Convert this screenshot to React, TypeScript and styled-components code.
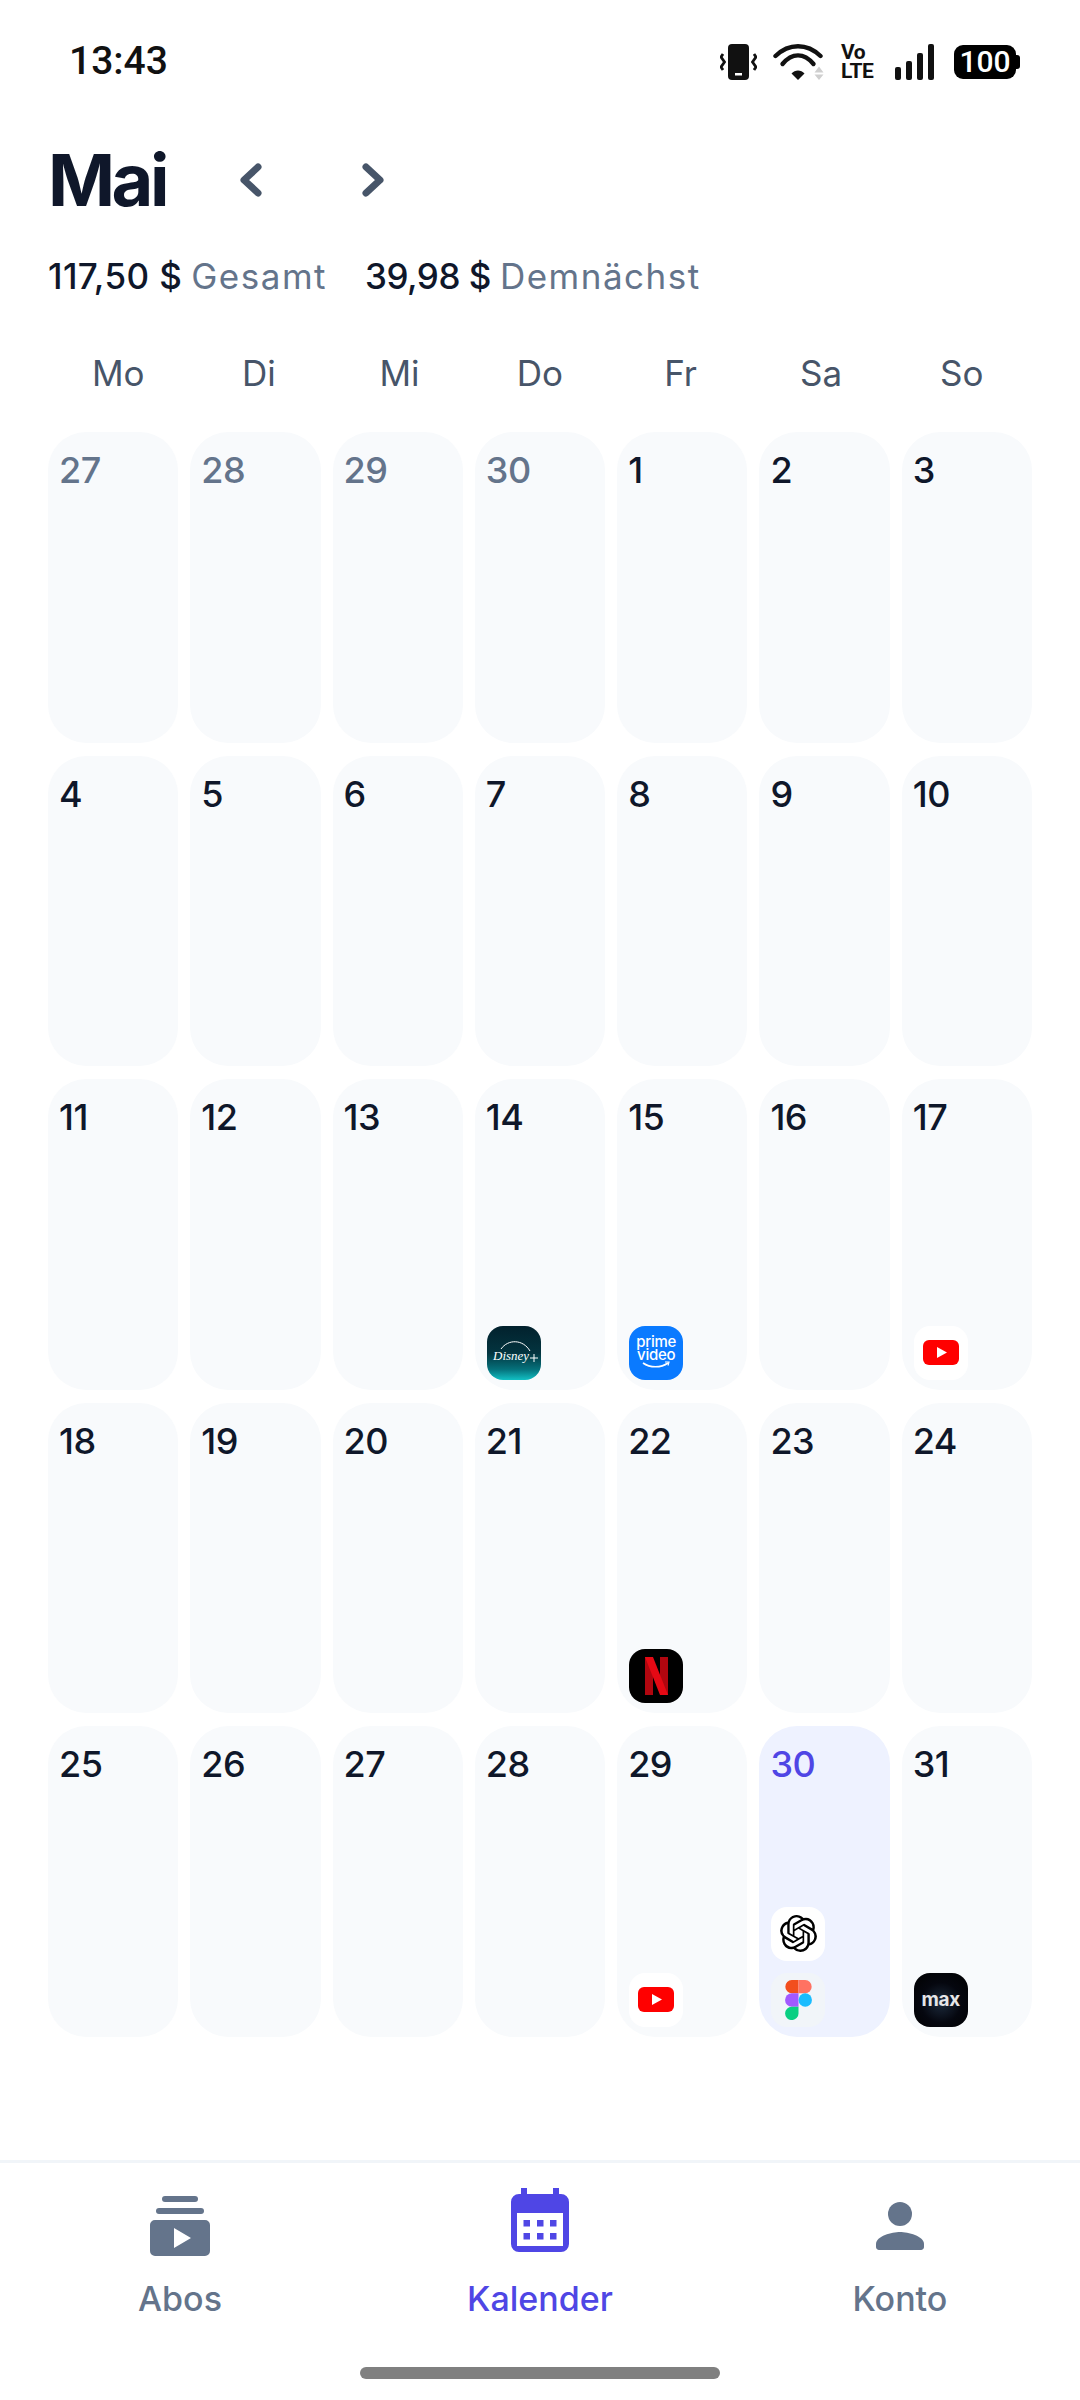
import React from "react";
import styled, { createGlobalStyle } from "styled-components";
import { SiOpenai } from "react-icons/si";

const GlobalStyle = createGlobalStyle`
  html, body {
    margin: 0;
    padding: 0;
    background: #fff;
  }
  body {
    font-family: "Inter", "Noto Sans", sans-serif;
    color: #0f172a;
  }
  * {
    box-sizing: border-box;
  }
`;

type AppIcon = "disney" | "prime" | "youtube" | "netflix" | "openai" | "figma" | "max";

type Day = {
  label: number;
  muted?: boolean;
  today?: boolean;
  icons?: AppIcon[];
};

const plain = (labels: number[]): Day[] => labels.map((label) => ({ label }));

const days: Day[] = [
  ...[27, 28, 29, 30].map((label) => ({ label, muted: true })),
  ...plain([1, 2, 3, 4, 5, 6, 7, 8, 9, 10, 11, 12, 13]),
  { label: 14, icons: ["disney"] },
  { label: 15, icons: ["prime"] },
  { label: 16 },
  { label: 17, icons: ["youtube"] },
  ...plain([18, 19, 20, 21]),
  { label: 22, icons: ["netflix"] },
  ...plain([23, 24, 25, 26, 27, 28]),
  { label: 29, icons: ["youtube"] },
  { label: 30, today: true, icons: ["openai", "figma"] },
  { label: 31, icons: ["max"] },
];

const weekdays = ["Mo", "Di", "Mi", "Do", "Fr", "Sa", "So"];

const Page = styled.div`
  width: 1080px;
  height: 2400px;
  display: flex;
  flex-direction: column;
  overflow: hidden;
  background: #fff;
`;

const StatusBar = styled.div`
  height: 134px;
  padding: 44px 64px 0 69px;
  display: flex;
  justify-content: space-between;
  align-items: flex-start;
`;

const Clock = styled.div`
  font-family: "Roboto", "Liberation Sans", sans-serif;
  font-size: 39px;
  font-weight: 500;
  line-height: 34px;
  color: #111;
`;

const StatusIcons = styled.div`
  display: flex;
  align-items: center;
  height: 36px;
`;

const WifiSvg = styled.svg`
  margin-left: 16px;
`;

const VoLte = styled.div`
  margin: 0 22px 0 17px;
  width: 32px;
  font-family: "Roboto", "Liberation Sans", sans-serif;
  font-weight: 700;
  color: #111;
  font-size: 21px;
  line-height: 19px;
  letter-spacing: -0.5px;
`;

const Battery = styled.div`
  margin-left: 20px;
  width: 62px;
  height: 34px;
  border-radius: 9px;
  background: #000;
  color: #fff;
  font-family: "Roboto", "Liberation Sans", sans-serif;
  font-size: 30px;
  font-weight: 500;
  line-height: 34px;
  text-align: center;
  position: relative;
  &::after {
    content: "";
    position: absolute;
    right: -4px;
    top: 10px;
    width: 4px;
    height: 14px;
    border-radius: 0 3px 3px 0;
    background: #000;
  }
`;

const Header = styled.div`
  padding: 0 48px;
  display: flex;
  align-items: center;
  height: 92px;
`;

const Month = styled.h1`
  margin: 0;
  width: 190px;
  font-size: 72px;
  font-weight: 700;
  line-height: 92px;
  letter-spacing: -3.5px;
  color: #0f172a;
`;

const ArrowButton = styled.button`
  width: 122px;
  height: 60px;
  padding: 0;
  border: 0;
  background: none;
  display: flex;
  align-items: center;
  color: #475569;
`;

const Totals = styled.div`
  margin-top: 28px;
  padding: 0 48px;
  display: flex;
  gap: 38px;
  font-size: 35px;
  line-height: 44px;
`;

const Total = styled.div`
  display: flex;
  gap: 9px;
`;

const Amount = styled.span<{ $spacing: number }>`
  font-weight: 500;
  letter-spacing: ${(p) => p.$spacing}px;
  color: #0f172a;
`;

const AmountLabel = styled.span`
  letter-spacing: 1.5px;
  color: #64748b;
`;

const WeekHeader = styled.div`
  margin-top: 47px;
  padding: 0 48px;
  display: grid;
  grid-template-columns: repeat(7, 1fr);
  height: 56px;
  align-items: center;
`;

const Weekday = styled.div`
  text-align: center;
  font-size: 35px;
  color: #475569;
`;

const Grid = styled.div`
  margin-top: 31px;
  padding: 0 48px;
  display: grid;
  grid-template-columns: repeat(7, 1fr);
  grid-auto-rows: 310.5px;
  gap: 13px 12px;
`;

const Cell = styled.div<{ $today?: boolean }>`
  padding: 15px 12px 10px;
  border-radius: 38px;
  background: ${(p) => (p.$today ? "#eef2ff" : "#f8fafc")};
  display: flex;
  flex-direction: column;
  justify-content: space-between;
`;

const DayNumber = styled.div<{ $muted?: boolean; $today?: boolean }>`
  margin-left: -1px;
  font-size: 36px;
  font-weight: 500;
  line-height: 46px;
  letter-spacing: -0.5px;
  color: ${(p) => (p.$today ? "#4f46e5" : p.$muted ? "#64748b" : "#0f172a")};
`;

const IconStack = styled.div`
  display: flex;
  flex-direction: column;
  gap: 12px;
`;

const Tile = styled.div<{ $bg: string }>`
  width: 54px;
  height: 54px;
  border-radius: 16px;
  background: ${(p) => p.$bg};
  display: flex;
  align-items: center;
  justify-content: center;
  overflow: hidden;
`;

const PrimeText = styled.div`
  font-size: 15px;
  font-weight: 500;
  line-height: 13px;
  letter-spacing: -0.3px;
  color: #fff;
  text-align: center;
  margin-top: -2px;
  svg {
    display: block;
    margin: 0 auto;
  }
`;

const MaxText = styled.span`
  font-size: 19px;
  font-weight: 700;
  letter-spacing: -0.3px;
  color: #e6e6e8;
`;

const BottomNav = styled.nav`
  margin-top: auto;
  height: 240px;
  border-top: 3px solid #f1f5f9;
  position: relative;
`;

const NavItems = styled.div`
  display: grid;
  grid-template-columns: repeat(3, 1fr);
  padding-top: 23px;
`;

const NavItem = styled.div<{ $active?: boolean }>`
  display: flex;
  flex-direction: column;
  align-items: center;
  gap: 21px;
  font-size: 34px;
  font-weight: 500;
  line-height: 40px;
  color: ${(p) => (p.$active ? "#4f46e5" : "#64748b")};
  svg {
    display: block;
  }
`;

const HomeBar = styled.div`
  position: absolute;
  left: 360px;
  bottom: 21px;
  width: 360px;
  height: 12px;
  border-radius: 6px;
  background: #808080;
`;

function VibrateIcon() {
  return (
    <svg width="37" height="36" viewBox="0 0 37 36" fill="none">
      <rect x="8" y="0" width="21" height="36" rx="4" fill="#111" />
      <rect x="15" y="29" width="7" height="2.5" fill="#fff" />
      <path d="M3 10l-2 3 3.5 5-3.5 5 2 3M34 10l2 3-3.5 5 3.5 5-2 3" stroke="#111" strokeWidth="2.8" />
    </svg>
  );
}

function WifiIcon() {
  return (
    <WifiSvg width="51" height="36" viewBox="0 0 51 36" fill="none">
      <path d="M2.5 12C16-1 34-1 47.5 12" stroke="#111" strokeWidth="4.4" strokeLinecap="round" />
      <path d="M9.5 20C19 8.5 31 8.5 40.5 20" stroke="#111" strokeWidth="4.4" strokeLinecap="round" />
      <path d="M18.5 29.5c3.5-4 9.5-4 13 0L25 36z" fill="#111" />
      <path d="M46 22.5l4.5 6h-9zM46 36l-4.5-5.5h9z" fill="#cfcfcf" />
    </WifiSvg>
  );
}

function SignalIcon() {
  return (
    <svg width="39" height="36" viewBox="0 0 39 36">
      <rect x="0" y="23" width="6" height="13" rx="2" fill="#111" />
      <rect x="11" y="17" width="6" height="19" rx="2" fill="#111" />
      <rect x="22" y="9" width="6" height="27" rx="2" fill="#111" />
      <rect x="33" y="0" width="6" height="36" rx="2" fill="#111" />
    </svg>
  );
}

function Chevron({ flip }: { flip?: boolean }) {
  return (
    <svg width="26" height="40" viewBox="0 0 26 40" fill="none">
      <path
        d={flip ? "M6 7l14 13L6 33" : "M20 7L6 20l14 13"}
        stroke="currentColor"
        strokeWidth="7"
        strokeLinecap="round"
        strokeLinejoin="round"
      />
    </svg>
  );
}

function DisneyTile() {
  return (
    <Tile $bg="linear-gradient(180deg, #02212d 0%, #03343f 50%, #05707a 80%, #12c0c4 100%)">
      <svg width="54" height="54" viewBox="0 0 54 54" fill="none">
        <path d="M14 23C21 13 36 13 43 25" stroke="#fff" strokeWidth="1" />
        <text x="6" y="34" fontFamily="Liberation Serif, serif" fontStyle="italic" fontSize="13" fill="#fff">
          Disney
        </text>
        <path d="M43 32h8M47 28v8" stroke="#fff" strokeWidth="1" />
      </svg>
    </Tile>
  );
}

function PrimeTile() {
  return (
    <Tile $bg="#0a7aff">
      <PrimeText>
        prime
        <br />
        video
        <svg width="30" height="8" viewBox="0 0 30 8" fill="none">
          <path d="M2 2c7 5 18 5 25 0" stroke="#fff" strokeWidth="1.6" />
          <path d="M24 1l4 0-1 3.5" stroke="#fff" strokeWidth="1.2" />
        </svg>
      </PrimeText>
    </Tile>
  );
}

function YoutubeTile() {
  return (
    <Tile $bg="#fff">
      <svg width="36" height="25" viewBox="0 0 36 25">
        <rect width="36" height="25" rx="6" fill="#f00" />
        <path d="M14 7l10 5.5L14 18z" fill="#fff" />
      </svg>
    </Tile>
  );
}

function NetflixTile() {
  return (
    <Tile $bg="#000">
      <svg width="23" height="38" viewBox="0 0 23 38">
        <path d="M0 0h8v38l-8 0z" fill="#b1060f" />
        <path d="M15 0h8v38h-8z" fill="#b1060f" />
        <path d="M0 0h8l15 38h-8z" fill="#e50914" />
      </svg>
    </Tile>
  );
}

function OpenaiTile() {
  return (
    <Tile $bg="#fff">
      <SiOpenai size={37} color="#000" />
    </Tile>
  );
}

function FigmaTile() {
  return (
    <Tile $bg="#f1f5f9">
      <svg width="27" height="40" viewBox="0 0 27 40">
        <path d="M13.5 0H6.75a6.67 6.67 0 0 0 0 13.33h6.75z" fill="#f24e1e" />
        <path d="M13.5 0h6.75a6.67 6.67 0 0 1 0 13.33H13.5z" fill="#ff7262" />
        <path d="M13.5 13.33H6.75a6.67 6.67 0 0 0 0 13.34h6.75z" fill="#a259ff" />
        <circle cx="20.25" cy="20" r="6.7" fill="#1abcfe" />
        <path d="M6.75 26.67h6.75v6.66a6.7 6.7 0 1 1-6.75-6.66z" fill="#0acf83" />
      </svg>
    </Tile>
  );
}

function MaxTile() {
  return (
    <Tile $bg="radial-gradient(circle at 50% 55%, #1c2a3c 0%, #05070f 50%, #000 100%)">
      <MaxText>max</MaxText>
    </Tile>
  );
}

const tiles: Record<AppIcon, () => React.ReactElement> = {
  disney: DisneyTile,
  prime: PrimeTile,
  youtube: YoutubeTile,
  netflix: NetflixTile,
  openai: OpenaiTile,
  figma: FigmaTile,
  max: MaxTile,
};

export default function App() {
  return (
    <Page>
      <GlobalStyle />
      <StatusBar>
        <Clock>13:43</Clock>
        <StatusIcons>
          <VibrateIcon />
          <WifiIcon />
          <VoLte>
            Vo
            <br />
            LTE
          </VoLte>
          <SignalIcon />
          <Battery>100</Battery>
        </StatusIcons>
      </StatusBar>

      <Header>
        <Month>Mai</Month>
        <ArrowButton>
          <Chevron />
        </ArrowButton>
        <ArrowButton>
          <Chevron flip />
        </ArrowButton>
      </Header>

      <Totals>
        <Total>
          <Amount $spacing={0.4}>117,50 $</Amount>
          <AmountLabel>Gesamt</AmountLabel>
        </Total>
        <Total>
          <Amount $spacing={-0.5}>39,98 $</Amount>
          <AmountLabel>Demnächst</AmountLabel>
        </Total>
      </Totals>

      <WeekHeader>
        {weekdays.map((day) => (
          <Weekday key={day}>{day}</Weekday>
        ))}
      </WeekHeader>

      <Grid>
        {days.map((day, i) => (
          <Cell key={i} $today={day.today}>
            <DayNumber $muted={day.muted} $today={day.today}>
              {day.label}
            </DayNumber>
            {day.icons && (
              <IconStack>
                {day.icons.map((icon) => {
                  const AppTile = tiles[icon];
                  return <AppTile key={icon} />;
                })}
              </IconStack>
            )}
          </Cell>
        ))}
      </Grid>

      <BottomNav>
        <NavItems>
          <NavItem>
            <svg width="72" height="72" viewBox="0 0 72 72" fill="currentColor">
              <rect x="18" y="10" width="36" height="6" rx="3" />
              <rect x="12" y="22" width="48" height="6" rx="3" />
              <path
                fillRule="evenodd"
                d="M11 34h50a5 5 0 0 1 5 5v26a5 5 0 0 1-5 5H11a5 5 0 0 1-5-5V39a5 5 0 0 1 5-5zM30 42v20l17-10z"
              />
            </svg>
            Abos
          </NavItem>
          <NavItem $active>
            <svg width="72" height="72" viewBox="0 0 72 72" fill="currentColor">
              <path
                fillRule="evenodd"
                d="M17 2h6v6h26V2h6v6h2a8 8 0 0 1 8 8v42a8 8 0 0 1-8 8H15a8 8 0 0 1-8-8V16a8 8 0 0 1 8-8h2zM13 27v33h46V27z"
              />
              <rect x="19.5" y="34" width="6.5" height="6.5" />
              <rect x="33" y="34" width="6.5" height="6.5" />
              <rect x="46" y="34" width="6.5" height="6.5" />
              <rect x="19.5" y="47" width="6.5" height="6.5" />
              <rect x="33" y="47" width="6.5" height="6.5" />
              <rect x="46" y="47" width="6.5" height="6.5" />
            </svg>
            Kalender
          </NavItem>
          <NavItem>
            <svg width="72" height="72" viewBox="0 0 72 72" fill="currentColor">
              <circle cx="36" cy="28" r="12" />
              <path d="M36 46c-8 0-24 4-24 12v3c0 1.65 1.35 3 3 3h42c1.65 0 3-1.35 3-3v-3c0-8-16-12-24-12z" />
            </svg>
            Konto
          </NavItem>
        </NavItems>
        <HomeBar />
      </BottomNav>
    </Page>
  );
}
